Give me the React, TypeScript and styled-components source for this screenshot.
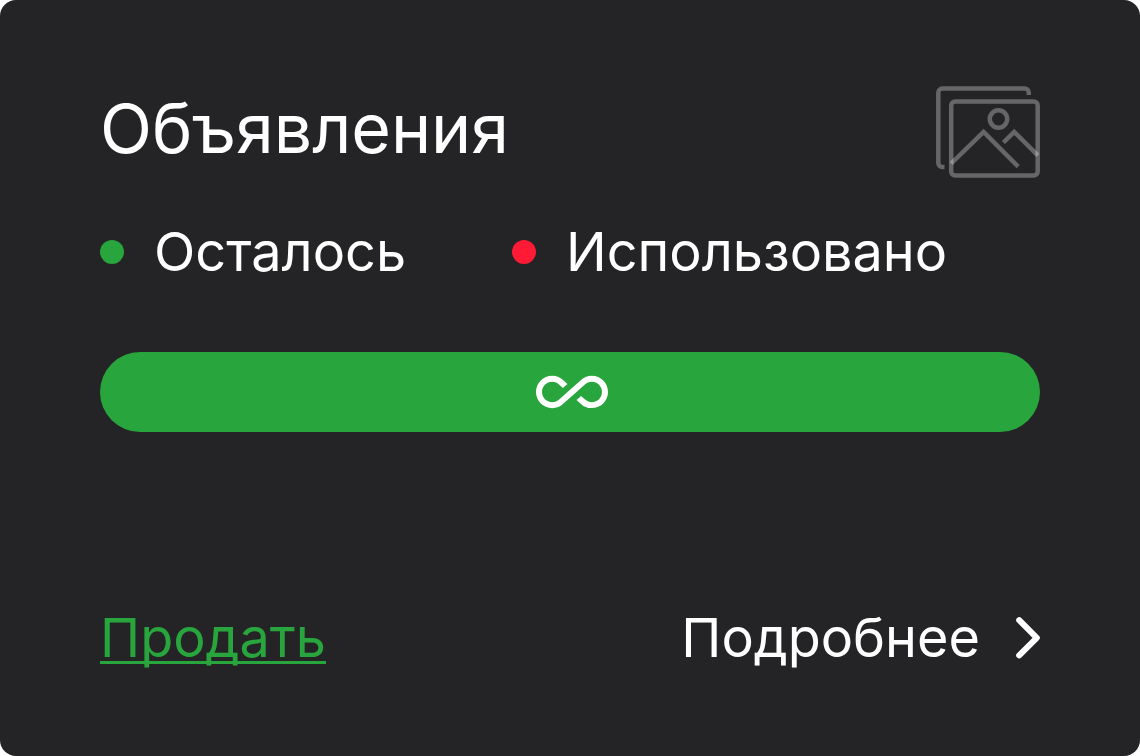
import styled, { createGlobalStyle } from 'styled-components';
import { MdAllInclusive } from 'react-icons/md';

const GlobalStyle = createGlobalStyle`
  *, *::before, *::after { box-sizing: border-box; }
  body {
    margin: 0;
    background: #ffffff;
    font-family: Inter, 'Liberation Sans', sans-serif;
    color: #ffffff;
  }
`;

const Card = styled.section`
  display: flex;
  flex-direction: column;
  min-height: 100vh;
  padding: 80px 100px;
  border-radius: 16px;
  background: #242426;
`;

const Header = styled.header`
  display: flex;
  align-items: center;
  justify-content: space-between;
  height: 104px;
`;

const Title = styled.h2`
  margin: 0;
  padding-bottom: 8px;
  font-size: 68px;
  line-height: 80px;
  font-weight: 400;
`;

const GalleryIcon = styled.svg`
  flex: none;
  width: 104px;
  height: 92px;
  fill: none;
  stroke: #ffffff;
  stroke-opacity: 0.3;
  stroke-width: 4.5;
`;

const Legend = styled.ul`
  display: flex;
  gap: 106px;
  margin: 36px 0 0;
  padding: 0;
  list-style: none;
`;

const LegendItem = styled.li<{ $color: string }>`
  display: flex;
  align-items: center;
  gap: 30px;
  font-size: 54px;
  line-height: 64px;

  &::before {
    content: '';
    flex: none;
    width: 24px;
    height: 24px;
    border-radius: 50%;
    background: ${({ $color }) => $color};
  }
`;

const Bar = styled.div`
  display: flex;
  align-items: center;
  justify-content: center;
  height: 80px;
  margin-top: 68px;
  padding-left: 4px;
  border-radius: 40px;
  background: #28a53c;
`;

const Footer = styled.footer`
  display: flex;
  align-items: center;
  justify-content: space-between;
  margin-top: auto;
  padding-top: 40px;
  font-size: 54px;
  line-height: 76px;
`;

const SellLink = styled.a`
  color: #28a53c;
  text-decoration: underline;
  text-decoration-thickness: 3px;
  text-underline-offset: 4px;
  text-decoration-skip-ink: none;
`;

const MoreButton = styled.button`
  display: flex;
  align-items: center;
  gap: 36px;
  padding: 0;
  border: 0;
  background: none;
  color: inherit;
  font: inherit;
  cursor: pointer;
`;

const Chevron = styled.svg`
  flex: none;
  width: 24px;
  height: 42px;
  fill: none;
  stroke: currentColor;
  stroke-width: 6;
  stroke-linecap: round;
  stroke-linejoin: round;
`;

export default function App() {
  return (
    <>
      <GlobalStyle />
      <Card>
        <Header>
          <Title>Объявления</Title>
          <GalleryIcon viewBox="0 0 104 92" aria-hidden="true">
            <path d="M92.8 9V6.6a4 4 0 0 0-4-4H6.3a4 4 0 0 0-4 4v70.4a4 4 0 0 0 4 4h2.2" />
            <rect x="15.2" y="15.5" width="86.5" height="74" rx="4" />
            <circle cx="62.5" cy="33" r="8.7" />
            <path d="M15.2 77.5L47.6 45.8L82.2 80.7" />
            <path d="M67.4 56.5L78.2 45.8L101.8 69.4" />
          </GalleryIcon>
        </Header>
        <Legend>
          <LegendItem $color="#28a53c">Осталось</LegendItem>
          <LegendItem $color="#ff1a35">Использовано</LegendItem>
        </Legend>
        <Bar role="img" aria-label="∞">
          <MdAllInclusive size={72} />
        </Bar>
        <Footer>
          <SellLink href="#sell">Продать</SellLink>
          <MoreButton type="button">
            Подробнее
            <Chevron viewBox="0 0 24 42" aria-hidden="true">
              <path d="M3.2 3.2L20.8 20.8L3.2 38.4" />
            </Chevron>
          </MoreButton>
        </Footer>
      </Card>
    </>
  );
}
